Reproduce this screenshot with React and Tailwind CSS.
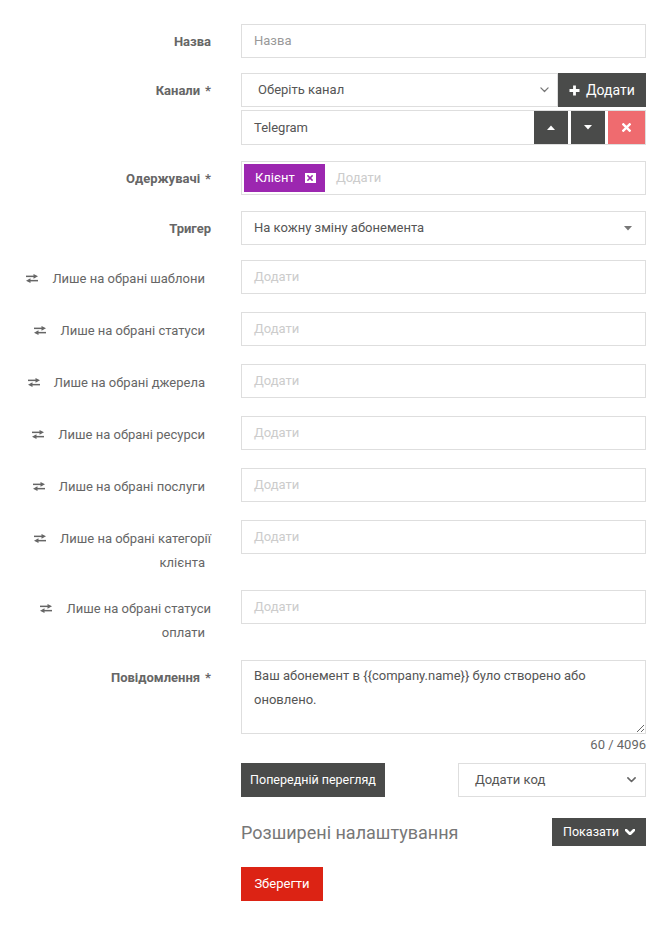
import React from "react";

// Two opposing arrows (exchange glyph) used before filter labels
const Exchange = () => (
  <svg width="12" height="9" viewBox="0 0 12 9" className="inline-block shrink-0" fill="#666">
    <rect x="0" y="1.6" width="8" height="1.5" />
    <path d="M7.5 0 L12 2.35 L7.5 4.7 Z" />
    <rect x="4" y="5.9" width="8" height="1.5" />
    <path d="M4.5 4.3 L0 6.65 L4.5 9 Z" />
  </svg>
);

const Chevron = ({ color = "#888", w = 9, sw = 1.4 }) => (
  <svg width={w} height={w * 0.6} viewBox="0 0 10 6" fill="none">
    <path d="M1 1 L5 5 L9 1" stroke={color} strokeWidth={sw} strokeLinecap="round" strokeLinejoin="round" />
  </svg>
);

const Caret = ({ up = false, color = "#fff" }) => (
  <svg width="8" height="5" viewBox="0 0 8 5">
    <path d={up ? "M0 5 L4 0.5 L8 5 Z" : "M0 0 L4 4.5 L8 0 Z"} fill={color} />
  </svg>
);

const Times = ({ size = 10, color = "#fff" }) => (
  <svg width={size} height={size} viewBox="0 0 10 10">
    <path d="M1.5 1.5 L8.5 8.5 M8.5 1.5 L1.5 8.5" stroke={color} strokeWidth="2.6" strokeLinecap="square" />
  </svg>
);

const Plus = () => (
  <svg width="11" height="11" viewBox="0 0 11 11">
    <path d="M5.5 0.5 V10.5 M0.5 5.5 H10.5" stroke="#fff" strokeWidth="2.8" />
  </svg>
);

const inputBox =
  "h-[34px] w-[405px] border border-[#dedede] bg-white px-[12px] flex items-center text-[13px]";

function BoldLabel({ children, required }) {
  return (
    <div className="w-[241px] h-[34px] shrink-0 pr-[30px] text-right font-bold text-[#666] leading-[36px] text-[13px]">
      {children}
      {required && <span className="ml-[5px]">*</span>}
    </div>
  );
}

function FilterRow({ text, last, tall }) {
  return (
    <div className={`flex items-start ${tall ? "h-[55px] mb-[15px]" : "h-[37px] mb-[15px]"}`}>
      <div className="w-[241px] shrink-0 pr-[30px] text-right text-[#666] leading-[24px] pt-[7px] text-[13px] pl-[20px]">
        <span className="inline-flex items-center mr-[14px] align-middle relative -top-[1px]">
          <Exchange />
        </span>
        {text} <span className="whitespace-nowrap pr-[6px]">{last}</span>
      </div>
      <div className={`${inputBox} text-[#ccc]`}>Додати</div>
    </div>
  );
}

export default function App() {
  return (
    <div className="w-[670px] min-h-[925px] bg-white pt-[24px] font-['Roboto','Liberation_Sans',sans-serif] text-[13px] text-[#555]">
      {/* Name */}
      <div className="flex items-start mb-[15px]">
        <BoldLabel>Назва</BoldLabel>
        <div className={`${inputBox} text-[#999]`}>Назва</div>
      </div>

      {/* Channels */}
      <div className="flex items-start mb-[16px]">
        <BoldLabel required>Канали</BoldLabel>
        <div className="w-[405px] flex flex-col gap-[3px]">
          <div className="flex h-[34px]">
            <div className="flex-1 border border-[#dedede] flex items-center justify-between pl-[16px] pr-[8px] text-[#555]">
              <span>Оберіть канал</span>
              <Chevron color="#777" />
            </div>
            <button className="w-[88px] h-[34px] bg-[#4a4b4a] text-white text-[14px] flex items-center justify-center gap-[6px]">
              <Plus />
              Додати
            </button>
          </div>
          <div className="flex h-[35px] border border-[#dedede]">
            <div className="flex-1 flex items-center pl-[12px] text-[#555]">Telegram</div>
            <button className="w-[34px] h-full bg-[#4a4b4a] flex items-center justify-center mr-[3px]">
              <Caret up />
            </button>
            <button className="w-[34px] h-full bg-[#4a4b4a] flex items-center justify-center mr-[3px]">
              <Caret />
            </button>
            <button className="w-[37px] h-full bg-[#ef6b6f] flex items-center justify-center">
              <Times size={9} />
            </button>
          </div>
        </div>
      </div>

      {/* Recipients */}
      <div className="flex items-start mb-[16px]">
        <BoldLabel required>Одержувачі</BoldLabel>
        <div className="w-[405px] h-[34px] border border-[#dedede] flex items-center pl-[2px] gap-[11px]">
          <span className="h-[28px] w-[81px] bg-[#9c27b0] text-white flex items-center pl-[11px] gap-[10px] text-[13px]">
            Клієнт
            <span className="w-[11px] h-[10px] bg-white flex items-center justify-center">
              <Times size={6} color="#9c27b0" />
            </span>
          </span>
          <span className="text-[#ccc]">Додати</span>
        </div>
      </div>

      {/* Trigger */}
      <div className="flex items-start mb-[15px]">
        <BoldLabel>Тригер</BoldLabel>
        <div className={`${inputBox} justify-between pr-[13px]`}>
          <span>На кожну зміну абонемента</span>
          <Caret color="#777" />
        </div>
      </div>

      <FilterRow text="Лише на обрані" last="шаблони" />
      <FilterRow text="Лише на обрані" last="статуси" />
      <FilterRow text="Лише на обрані" last="джерела" />
      <FilterRow text="Лише на обрані" last="ресурси" />
      <FilterRow text="Лише на обрані" last="послуги" />
      <FilterRow text="Лише на обрані категорії" last="клієнта" tall />
      <FilterRow text="Лише на обрані статуси" last="оплати" tall />

      {/* Message */}
      <div className="flex items-start">
        <BoldLabel required>Повідомлення</BoldLabel>
        <div className="w-[405px] flex flex-col">
          <textarea
            className="w-full h-[74px] border border-[#dedede] px-[12px] py-[3px] leading-[24px] text-[13px] text-[#555] outline-none"
            defaultValue="Ваш абонемент в {{company.name}} було створено або оновлено."
          />
          <div className="text-right text-[#666] leading-[22px]">60 / 4096</div>
          <div className="flex justify-between mt-[7px]">
            <button className="h-[34px] w-[144px] bg-[#4a4b4a] text-white text-[12.5px]">
              Попередній перегляд
            </button>
            <div className="h-[34px] w-[188px] border border-[#dedede] flex items-center justify-between pl-[16px] pr-[9px] text-[#555]">
              <span>Додати код</span>
              <Chevron color="#666" sw={1.8} />
            </div>
          </div>
          <div className="flex items-center justify-between mt-[21px] h-[28px]">
            <span className="text-[18px] text-[#777]">Розширені налаштування</span>
            <button className="h-[28px] w-[94px] bg-[#4a4b4a] text-white text-[12.5px] flex items-center justify-center gap-[6px]">
              Показати
              <Chevron color="#fff" w={10} sw={2.6} />
            </button>
          </div>
          <div className="mt-[21px]">
            <button className="h-[34px] w-[82px] bg-[#dc2314] text-white text-[13px]">Зберегти</button>
          </div>
        </div>
      </div>
    </div>
  );
}
